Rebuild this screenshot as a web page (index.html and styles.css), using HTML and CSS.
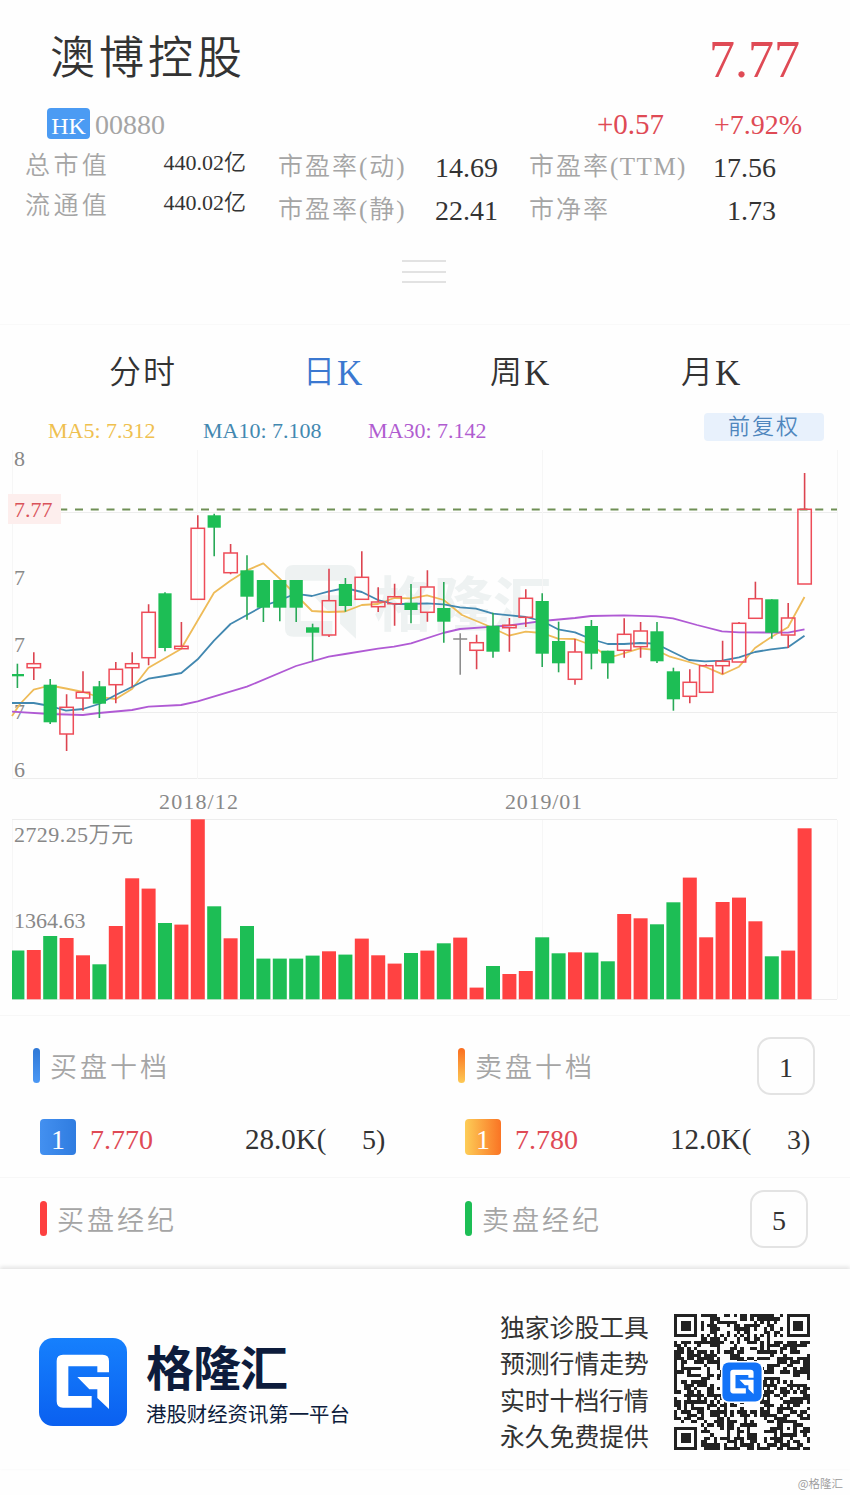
FILE: index.html
```html
<!DOCTYPE html>
<html lang="zh-CN">
<head>
<meta charset="utf-8">
<title>澳博控股 00880</title>
<link rel="stylesheet" href="styles.css">
</head>
<body>
<div class="header">
  <div class="title-row">
    <div class="name">澳博控股</div>
    <div class="price">7.77</div>
  </div>
  <div class="code-row">
    <span class="hk">HK</span>
    <span class="code">00880</span>
    <span class="change">+0.57</span>
    <span class="percent">+7.92%</span>
  </div>
  <div class="stats">
    <div class="stat-col s1">
      <div class="stat"><span class="label">总市值</span><span class="value">440.02亿</span></div>
      <div class="stat"><span class="label">流通值</span><span class="value">440.02亿</span></div>
    </div>
    <div class="stat-col s2">
      <div class="stat"><span class="label">市盈率(动)</span><span class="value">14.69</span></div>
      <div class="stat"><span class="label">市盈率(静)</span><span class="value">22.41</span></div>
    </div>
    <div class="stat-col s3">
      <div class="stat"><span class="label">市盈率<b>(TTM)</b></span><span class="value">17.56</span></div>
      <div class="stat"><span class="label">市净率</span><span class="value">1.73</span></div>
    </div>
  </div>
  <div class="handle"><i></i><i></i><i></i></div>
</div>

<div class="tabs">
  <span class="tab">分时</span>
  <span class="tab on">日<b>K</b></span>
  <span class="tab">周<b>K</b></span>
  <span class="tab">月<b>K</b></span>
</div>
<div class="legend">
  <span class="ma5">MA5: 7.312</span>
  <span class="ma10">MA10: 7.108</span>
  <span class="ma30">MA30: 7.142</span>
  <span class="fq">前复权</span>
</div>

<svg class="chart" width="850" height="570" viewBox="0 445 850 570">
  <g class="mark">
    <g transform="translate(261 542.4) scale(.452)">
      <path d="M210 103H175V85H88V174H158V209H72Q53 209 53 190V69Q53 50 72 50H191Q210 50 210 69Z"/>
      <path d="M115 117H210V213L175 180V154H151Z"/>
    </g>
    <text x="374" y="626" textLength="178">格隆汇</text>
  </g>
  <path class="grid" d="M12 512.5H837M12 712.5H837M12 778.5H837M12 819.5H837M12 999.5H837"/>
  <path class="grid v" d="M12.5 450V779M197.5 450V779M542.5 450V779M837.5 450V779M12.5 820V999M542.5 820V999M837.5 820V999"/>
  <line class="now" x1="59.25" y1="509.5" x2="837" y2="509.5"/>
  <g class="axis">
    <text x="14" y="466">8</text>
    <text x="14" y="585">7</text>
    <text x="14" y="652">7</text>
    <text x="14" y="719">7</text>
    <text x="14" y="777">6</text>
    <text x="159" y="809" textLength="79">2018/12</text>
    <text x="505" y="809" textLength="77">2019/01</text>
    <text x="14" y="842" textLength="119">2729.25万元</text>
    <text x="14" y="928">1364.63</text>
  </g>
  <rect class="now-box" x="8" y="494" width="53" height="30"/>
  <text class="now-text" x="14" y="517">7.77</text>
  <g id="lines"></g>
  <g id="candles"></g>
  <g id="volume"></g>
</svg>

<div class="book">
  <div class="cell head"><i class="bar blue"></i>买盘十档</div>
  <div class="cell head"><i class="bar orange"></i>卖盘十档<span class="count">1</span></div>
  <div class="cell row"><span class="num nblue">1</span><span class="p">7.770</span><span class="q">28.0K(</span><span class="n">5)</span></div>
  <div class="cell row"><span class="num norange">1</span><span class="p">7.780</span><span class="q">12.0K(</span><span class="n">3)</span></div>
</div>
<div class="book brokers">
  <div class="cell head"><i class="bar red"></i>买盘经纪</div>
  <div class="cell head"><i class="bar green"></i>卖盘经纪<span class="count">5</span></div>
</div>

<div class="footer">
  <svg class="logo" viewBox="0 0 264 264">
    <defs><linearGradient id="lg" x1="0" y1="0" x2="0" y2="1"><stop offset="0" stop-color="#1680fd"/><stop offset="1" stop-color="#0a60f0"/></linearGradient></defs>
    <rect width="264" height="264" rx="42" fill="url(#lg)"/>
    <path fill="#fff" d="M210 103H175V85H88V174H158V209H72Q53 209 53 190V69Q53 50 72 50H191Q210 50 210 69Z"/>
    <path fill="#fff" d="M115 117H210V213L175 180V154H151Z"/>
  </svg>
  <div class="brand">
    <div class="brand-name">格隆汇</div>
    <div class="slogan">港股财经资讯第一平台</div>
  </div>
  <div class="promo">
    <div>独家诊股工具</div>
    <div>预测行情走势</div>
    <div>实时十档行情</div>
    <div>永久免费提供</div>
  </div>
  <svg class="qr" viewBox="0 0 41 41" shape-rendering="crispEdges">
    <path id="qr"/>
    <g transform="translate(14.6 14.6) scale(.0447)" shape-rendering="auto">
      <rect x="-10" y="-10" width="284" height="284" rx="46" fill="#fff"/>
      <rect width="264" height="264" rx="42" fill="#1273f8"/>
      <path fill="#fff" d="M210 103H175V85H88V174H158V209H72Q53 209 53 190V69Q53 50 72 50H191Q210 50 210 69Z"/>
      <path fill="#fff" d="M115 117H210V213L175 180V154H151Z"/>
    </g>
  </svg>
</div>
<div class="copy">@格隆汇</div>
<script src="script.js"></script>
</body>
</html>
```
FILE: styles.css
```css
body
{
margin:0;
width:850px;
height:1495px;
overflow:hidden;
background:#fefefe;
color:#333;
font-family:"Liberation Serif","Noto Sans CJK SC",serif;
font-weight:350;
}
span,b,i
{
font-weight:inherit;
font-style:normal;
white-space:nowrap;
}
.header
{
height:325px;
border-bottom:1px solid #f9f9f9;
box-sizing:border-box;
}
.title-row
{
display:flex;
justify-content:space-between;
height:108px;
padding:0 50px 0 50px;
}
.name
{
font-size:45px;
letter-spacing:4px;
line-height:118px;
}
.price
{
font-size:52px;
line-height:119px;
color:#df4a55;
}
.code-row
{
display:flex;
height:32px;
padding-left:47px;
line-height:33px;
font-size:28px;
}
.hk
{
width:43px;
height:31px;
border-radius:4px;
background:#4b9bf3;
color:white;
font-size:24px;
line-height:36px;
text-align:center;
margin-right:5px;
}
.code
{
color:#a5a5a5;
width:502px;
}
.change
{
color:#df4a55;
width:117px;
font-size:29px;
}
.percent
{
color:#df4a55;
}
.stats
{
display:flex;
height:100px;
padding-left:25px;
}
.stat
{
display:flex;
justify-content:space-between;
height:40px;
line-height:51px;
}
.label
{
font-size:25px;
letter-spacing:3.4px;
color:#a5a5a5;
}
.value
{
font-size:28px;
}
.s1
{
width:221px;
margin-right:32px;
}
.s1 .value
{
font-size:22px;
line-height:45px;
}
.s2
{
width:220px;
margin-right:31px;
}
.s3
{
width:247px;
}
.s2 .stat,.s3 .stat
{
height:43px;
line-height:54px;
}
.s2 .value,.s3 .value
{
line-height:56px;
}
.s2 .label,.s3 .label
{
letter-spacing:2px;
}
.s3 .label b
{
letter-spacing:1.5px;
}
.handle
{
width:44px;
margin:20px auto 0 402px;
}
.handle i
{
display:block;
height:2px;
margin-bottom:8.5px;
background:#e2e2e2;
}
.tabs
{
display:flex;
height:88px;
padding-left:109px;
font-size:32px;
line-height:94px;
}
.tab
{
flex:none;
width:191px;
letter-spacing:2px;
}
.tab:first-child
{
width:194px;
}
.tab:last-child
{
width:auto;
}
.tab b
{
font-size:35px;
line-height:1;
vertical-align:-2px;
}
.tab.on
{
color:#3b78d0;
width:187px;
}
.legend
{
display:flex;
height:32px;
padding-left:48px;
font-size:22px;
line-height:36px;
}
.ma5
{
color:#efc04f;
width:155px;
}
.ma10
{
color:#4388b0;
width:165px;
}
.ma30
{
color:#b05cd0;
width:336px;
}
.fq
{
width:120px;
height:28px;
border-radius:4px;
background:#e8f1fc;
color:#4f86bd;
line-height:28px;
letter-spacing:2px;
text-align:center;
}
.chart
{
display:block;
height:570px;
}
.grid
{
stroke:#ededed;
fill:none;
}
.v
{
stroke:#f6f6f6;
}
.now
{
stroke:#6f8f55;
stroke-width:2;
stroke-dasharray:8 7.75;
}
.axis
{
font-size:22px;
fill:#888;
}
.now-box
{
fill:#fdeeed;
}
.now-text
{
font-size:22px;
fill:#d9535a;
}
.mark
{
fill:#eef2f2;
}
.mark text
{
font-size:59px;
font-weight:700;
}
.book
{
display:grid;
grid-template-columns:425px 425px;
grid-template-rows:88px 74px;
height:161px;
border-top:1px solid #f7f7f7;
}
.cell
{
display:flex;
align-items:center;
}
.head
{
padding-left:33px;
font-size:27px;
letter-spacing:3px;
color:#a5a5a5;
height:99px;
}
.bar
{
width:7px;
height:35px;
border-radius:4px;
margin-right:10px;
}
.blue
{
background:linear-gradient(#2f78d6,#4b98f5);
}
.orange
{
background:linear-gradient(#fa6d1f,#fdc954);
}
.red
{
background:#fd4040;
}
.green
{
background:#1dbe55;
}
.count
{
width:54px;
height:54px;
border:2px solid #e3e3e3;
border-radius:14px;
margin-left:auto;
margin-right:35px;
line-height:58px;
text-align:center;
letter-spacing:0;
font-size:28px;
color:#333;
}
.row
{
height:66px;
padding-left:40px;
font-size:28px;
}
.num
{
width:36px;
height:36px;
border-radius:4px;
color:white;
text-align:center;
line-height:42px;
margin-right:14px;
}
.nblue
{
background:linear-gradient(90deg,#4390f0,#2f7ce0);
}
.norange
{
background:linear-gradient(90deg,#fdcd57,#fa7424);
}
.p
{
width:155px;
color:#df4a55;
padding-top:5px;
}
.q
{
width:117px;
font-size:29px;
padding-top:5px;
}
.n
{
padding-top:5px;
}
.brokers
{
grid-template-rows:92px;
height:91px;
}
.brokers .head
{
padding-left:40px;
height:81px;
}
.brokers .count
{
margin-right:42px;
}
.footer
{
display:flex;
height:200px;
background:#fefefe;
box-shadow:0 -2px 4px #e2e2e2;
font-family:"Noto Sans CJK SC",sans-serif;
font-weight:400;
color:#0d1c3c;
}
.logo
{
width:88px;
height:88px;
margin:69px 19px 0 39px;
}
.brand
{
width:354px;
padding-top:64px;
}
.brand-name
{
font-size:48px;
line-height:64px;
letter-spacing:-1px;
font-weight:700;
}
.slogan
{
font-size:20.4px;
line-height:32px;
}
.promo
{
width:174px;
padding-top:39px;
font-size:24.8px;
line-height:36.3px;
color:#333;
}
.qr
{
width:136px;
height:136px;
margin-top:45px;
}
#qr
{
fill:#222;
}
.copy
{
padding-right:7px;
text-align:right;
font-family:"Noto Sans CJK SC",sans-serif;
font-size:11.5px;
line-height:28px;
color:#999;
}
```
FILE: script.js
```js
// colour, high, body top, body bottom, low, volume top
var days = [
['g',663.7,674,676.3,688,950.5],['r',652.3,663.7,667.7,680,950],['g',679,684.7,722.3,724,936],
['r',694.3,707.3,734,751,938],['r',671.3,692.3,698,710.7,955.3],['g',681,686.3,703.7,718,964.3],
['r',662,669.3,684.7,703.3,926],['r',652.3,663.7,667.7,687.3,878.3],['r',604.3,612.3,657.7,665.3,888.6],
['g',592.3,593.3,648,651.3,923],['r',622,646.3,648.7,648.7,924.6],['r',515.3,528.3,599.3,599.3,819.3],
['g',513.7,515.3,527.7,556.3,906.3],['r',544,553,572.7,574.3,938.3],['g',555.3,570.3,596.7,619.7,926],
['g',580,580,607.7,622,958.6],['g',580,580,607.7,621.3,958.6],['g',580,580,607.7,622,958.6],
['g',623.7,627.3,632.7,660.7,955.6],['r',568.7,600.7,635,637,951.3],['g',578,584,606,611.7,954.6],
['r',551.3,577.3,599.3,599.3,938.6],['r',587.3,602,606.7,612,955.3],['r',583.7,596.7,603.7,625.7,963.6],
['g',584,602.7,610,623.3,953],['r',570.3,587,612.3,621.7,950.6],['g',582,608,621.7,642.7,943.3],
['n',633.3,639,639,674.7,937.6],['r',634.7,642.7,650.3,669.3,987.6],['g',612.7,625.7,651.7,657.7,966],
['r',618,625.3,627.7,651.7,974],['r',589.3,598.3,617.3,627,971],['g',593.3,601,653.7,667,937.3],
['g',621.7,641,663.3,672.3,953.3],['r',639,652,679.3,684.7,952.3],['g',620,626,653.7,669.3,952.6],
['g',650.7,650.7,663.3,678.7,961.3],['r',618.3,634.3,650.3,657.7,914],['r',622,631,646.7,657.7,918.3],
['g',622,631.3,661.3,663,924.3],['g',667.7,671.3,699.3,710.7,902.3],['r',669.3,682.3,696.3,703.3,877.6],
['r',664.3,665.7,692.3,692.3,937.3],['r',640.7,661.3,665.7,674.3,902],['r',622,623.3,662,662,897.6],
['r',581.7,598.7,618.3,618.3,921.3],['g',599.3,599.3,632.7,638.7,956.3],['r',603,618,635,648,950.6],
['r',473,509.3,584,584,828.3]
];
var ma = {
'#eebb58':'12,716 20,704 33.7,689.7 50,685.5 66,688.5 82.9,692 99,697 115.7,699 132,689 148.5,667.7 181,649 214,592.7 230,581 246.9,570.3 263.3,563.3 279.7,578.7 303,602 312,611 328.7,612 345,611.5 361.8,605 378,604 394,598 411,598.3 427,595.3 443.7,600 462,615 486,625 509,635.7 525.7,631.7 542,633 558,638.7 575,639 591,645 607,656 615,656 640,648.3 656,650 670,656.7 689,662 705.7,667 722.7,674.3 739,666.7 755,648 771.7,636.7 788,627.3 804.5,597',
'#4288b0':'12,703 33.7,703 50,706 66,710.7 82.9,709 99,704 115.7,695 148.5,678.7 164.9,676 181.3,673 197.7,659.3 214,640.7 230.5,624 246.9,615 263,606 279,600.7 290,596 302,594.7 312,596 328,591.7 345,588 361.8,592 378,600 394,604 411,604 427,603.3 443.7,604.3 460,607.3 476,608.7 492.9,613.7 525.7,617 542,621 558,629.3 575,632.3 591,639 607.7,644 624,644 640,643 656,643.7 672,651.7 689,660 705,661.3 722,660.7 739,657.3 755,652 771,649.3 788,647.3 804.5,635.7',
'#b05ad4':'12,711.7 50,714 82.9,715 99,713 132,710 148.5,706.7 181,705 197.7,701.3 246.9,686.7 296,666 328.7,656.7 345,654 378,648.7 394,646.7 411,643.3 443,633 460,629 493,626.7 509,625.5 525,623.3 542,621 575,618 591,616 624,615.3 656,616.3 673,618.3 697,625 722,631.3 739,632.3 788,632.7 804.5,629.3'
};
var colors = {r:'#ff4242', g:'#1dbe55', n:'#888'};

var candles = '', volume = '', redBodies = '';
for (var i = 0; i < days.length; i++) {
  var d = days[i], c = d[0], x = 17.4 + i * 16.4;
  var left = Math.max(x - 7, 12), w = x + 7 - left;
  if (c == 'g') {
    candles += '<path d="M' + x + ' ' + d[1] + 'V' + d[4] + '" stroke="#28a957" stroke-width="1.6"/>';
    candles += '<rect x="' + Math.max(x - 6.6, 12) + '" y="' + d[2] + '" width="' + (x + 6.6 - Math.max(x - 6.6, 12)) + '" height="' + (d[3] - d[2]) + '" fill="#1dbe55"/>';
  } else if (c == 'r') {
    redBodies += '<path d="M' + x + ' ' + d[1] + 'V' + d[2] + 'M' + x + ' ' + d[3] + 'V' + d[4] + '" stroke="#dc4450" stroke-width="1.6"/>';
    redBodies += '<rect x="' + (x - 6.7) + '" y="' + d[2] + '" width="13.4" height="' + (d[3] - d[2]) + '" fill="none" stroke="#ee4c58" stroke-width="1.5"/>';
  } else {
    candles += '<path d="M' + x + ' ' + d[1] + 'V' + d[4] + 'M' + (x - 7) + ' ' + d[2] + 'h14" stroke="#888" stroke-width="1.5"/>';
  }
  volume += '<rect x="' + left + '" y="' + d[5] + '" width="' + w + '" height="' + (999.3 - d[5]) + '" fill="' + (c == 'g' ? colors.g : colors.r) + '"/>';
}
document.getElementById('candles').innerHTML = candles + redBodies;
document.getElementById('volume').innerHTML = volume;

var lines = '';
for (var k in ma) {
  lines += '<polyline points="' + ma[k] + '" fill="none" stroke="' + k + '" stroke-width="1.8" stroke-linejoin="round"/>';
}
document.getElementById('lines').innerHTML = lines;

// qr modules
var N = 41, seed = 7, path = '';
function rnd() {
  seed = (seed * 16807) % 2147483647;
  return seed / 2147483647;
}
function ring(x, y, cx, cy) {
  return Math.max(Math.abs(x - cx), Math.abs(y - cy));
}
for (var y = 0; y < N; y++) {
  for (var x = 0; x < N; x++) {
    var on = rnd() > 0.5;
    if (x == 6 || y == 6) on = (x + y) % 2 == 0;
    [[3, 3], [N - 4, 3], [3, N - 4]].forEach(function (f) {
      var r = ring(x, y, f[0], f[1]);
      if (r <= 4) on = r == 3 || r < 2;
    });
    var a = ring(x, y, N - 7, N - 7);
    if (a <= 2) on = a != 1;
    if (on) path += 'M' + x + ' ' + y + 'h1v1h-1z';
  }
}
document.getElementById('qr').setAttribute('d', path);
```
